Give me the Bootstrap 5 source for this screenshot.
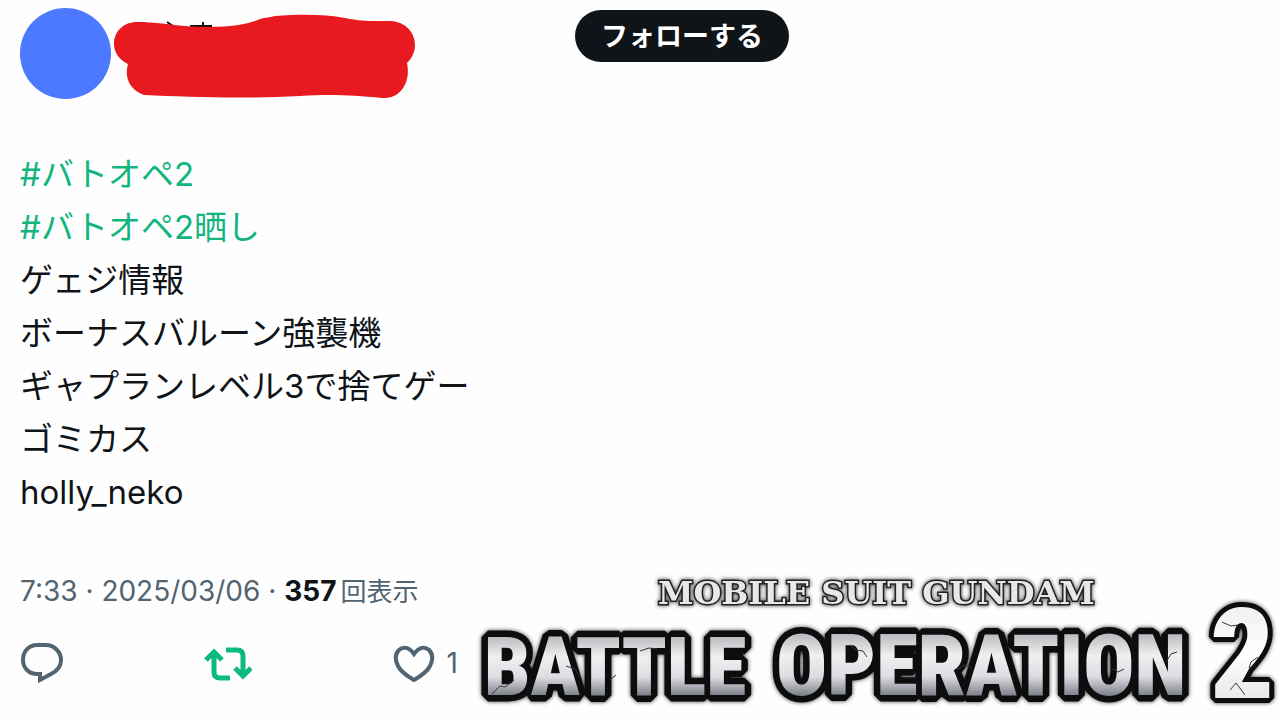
<!DOCTYPE html>
<html lang="ja">
<head>
<meta charset="utf-8">
<meta name="viewport" content="width=device-width, initial-scale=1">
<title>#バトオペ2</title>
<link href="https://cdn.jsdelivr.net/npm/bootstrap@5.3.0/dist/css/bootstrap.min.css" rel="stylesheet">
<style>
  body { font-family: Inter, "Noto Sans CJK JP", sans-serif; color: #0f1419; background: #fefefe; }
  .post { padding: 8px 0 0 20px; }
  .avatar { width: 91px; height: 91px; background: #4c79ff; }
  .redaction { width: 304px; height: 91px; margin-left: 1px; }
  .btn-follow { --bs-btn-color: #fff; --bs-btn-bg: #0f1419; --bs-btn-hover-color: #fff; --bs-btn-hover-bg: #272c30;
    width: 214px; height: 52px; margin: 2px 0 0 159px; padding: 0; font-size: 27px; line-height: 52px; font-weight: 700; }
  .post-text { margin-top: 49px; font-size: 33px; line-height: 53px; }
  .post-text a { color: #12b580; text-decoration: none; }
  .post-foot { margin-top: 48px; }
  .post-info { width: 438px; }
  .post-meta { font-size: 28px; line-height: 48px; color: #536471; white-space: nowrap; }
  .post-meta strong { color: #0f1419; }
  .post-meta .unit { font-size: 26px; }
  .post-actions { margin-top: 19px; height: 56px; }
  .action { padding: 0; border: 0; background: none; color: #536471; font-size: 28px; line-height: 56px; }
  .action-on { color: #0bba7c; }
  .game-logo { min-width: 0; margin-left: 22px; overflow: visible; }
</style>
</head>
<body>
<article class="post">
  <header class="d-flex align-items-start">
    <div class="avatar rounded-circle flex-shrink-0"></div>
    <svg class="redaction flex-shrink-0" viewBox="112 8 304 91" aria-hidden="true">
      <path d="M137 23h8M167 22l6 4M190 26h22M203 22v5" stroke="#111" stroke-width="2" fill="none"/>
      <path d="M128 64C119 60 114 52 114 44C114 31 124 22 137 22C160 22 180 27 208 27C235 27 248 24 260 19C266 17 269 18 275 16C300 14 325 14 345 18C365 22 374 21 391 21C405 22 415 32 415 45C415 53 411 59 407 63C411 82 401 99 382 98C352 95 330 94 300 96C242 99 190 97 144 95C130 90 124 78 128 64Z" fill="#e8191f"/>
    </svg>
    <button type="button" class="btn btn-follow rounded-pill flex-shrink-0">フォローする</button>
  </header>

  <div class="post-text">
    <a href="#tag">#バトオペ2</a><br>
    <a href="#tag-sarashi">#バトオペ2晒し</a><br>
    ゲェジ情報<br>
    ボーナスバルーン強襲機<br>
    ギャプランレベル3で捨てゲー<br>
    ゴミカス<br>
    holly_neko
  </div>

  <footer class="post-foot d-flex align-items-start">
    <div class="post-info flex-shrink-0">
      <div class="post-meta">7:33 · 2025/03/06 · <strong>357</strong><span class="unit ms-1">回表示</span></div>
      <div class="post-actions d-flex align-items-center justify-content-between">
        <button type="button" class="action" aria-label="返信">
          <svg class="d-block" width="43" height="44" viewBox="0 0 43 44" fill="none" stroke="currentColor" stroke-width="4"><path d="M17 4H26C34 4 41 11 41 19C41 26 37 30 31 33L20 39V33H17C9 33 3 27 3 19C3 10 9 4 17 4Z"/></svg>
        </button>
        <button type="button" class="action action-on" aria-label="リポスト">
          <svg class="d-block" width="48" height="44" viewBox="0 0 48 44" fill="none" stroke="currentColor" stroke-width="5"><path d="M2 19L10 11L18 19M10 12V31Q10 37 16 37H26M22 9H33Q39 9 39 15V34M31 27L39 35L47 27"/></svg>
        </button>
        <button type="button" class="action d-flex align-items-center" aria-label="いいね 1">
          <svg width="42" height="44" viewBox="0 0 42 44" fill="none" stroke="currentColor" stroke-width="4"><path d="M21 13C16 6 10 5 6 9C2 13 2 19 5 25C8 31 14 35 21 39C28 35 34 31 37 25C40 19 40 13 36 9C32 5 26 6 21 13Z"/></svg>
          <span class="ms-2 ps-1">1</span>
        </button>
      </div>
    </div>
    <svg class="game-logo flex-fill" viewBox="480 567 800 146" role="img" aria-label="Mobile Suit Gundam Battle Operation 2">
      <defs>
        <linearGradient id="steel" x1="0" y1="0.15" x2="0" y2="0.85">
          <stop offset="0" stop-color="#b2b3b7"/><stop offset=".35" stop-color="#f0f0f2"/>
          <stop offset=".65" stop-color="#dcdde2"/><stop offset="1" stop-color="#62666f"/>
        </linearGradient>
        <linearGradient id="bright" x1="0" y1="0" x2="0" y2="1">
          <stop offset="0" stop-color="#e8e8ea"/><stop offset=".5" stop-color="#fff"/><stop offset="1" stop-color="#d8d8dc"/>
        </linearGradient>
        <filter id="halo" x="-5%" y="-20%" width="110%" height="140%"><feDropShadow dx="0" dy="0" stdDeviation="2" flood-color="#000" flood-opacity=".8"/></filter>
      </defs>
      <text x="658" y="604" font-family="'DejaVu Serif'" font-weight="700" font-size="32" fill="#e8e8e8" stroke="#222" stroke-width="3" paint-order="stroke" filter="url(#halo)">MOBILE SUIT GUNDAM</text>
      <g font-family="'Roboto Condensed', 'Open Sans Condensed', 'Noto Sans Condensed', Roboto" font-weight="900" fill="url(#steel)" stroke="#0b0b0d" stroke-width="13" stroke-linejoin="bevel" paint-order="stroke" filter="url(#halo)">
        <text x="484" y="695" font-size="82">BATTLE</text>
        <text x="776" y="695" font-size="85">OPERATION</text>
        <text x="1210" y="698" font-size="126" fill="url(#bright)" stroke-width="10">2</text>
      </g>
      <path d="M492 694l8-8 5 1 9-7M566 666l9 3 5 8M610 680l6-5M640 651l9-3 8 1M850 645l6 5 7 1 4 6M957 670l7-5 8 3M1110 668l8 4 6-3M1166 662l5-8 6-2M1222 622l9 4 8-1M1258 657l-7 5-2 6M1230 690l6-7 9 12" stroke="#33353b" stroke-width="1" fill="none"/>
    </svg>
  </footer>
</article>
<script src="https://cdn.jsdelivr.net/npm/bootstrap@5.3.0/dist/js/bootstrap.bundle.min.js"></script>
</body>
</html>
